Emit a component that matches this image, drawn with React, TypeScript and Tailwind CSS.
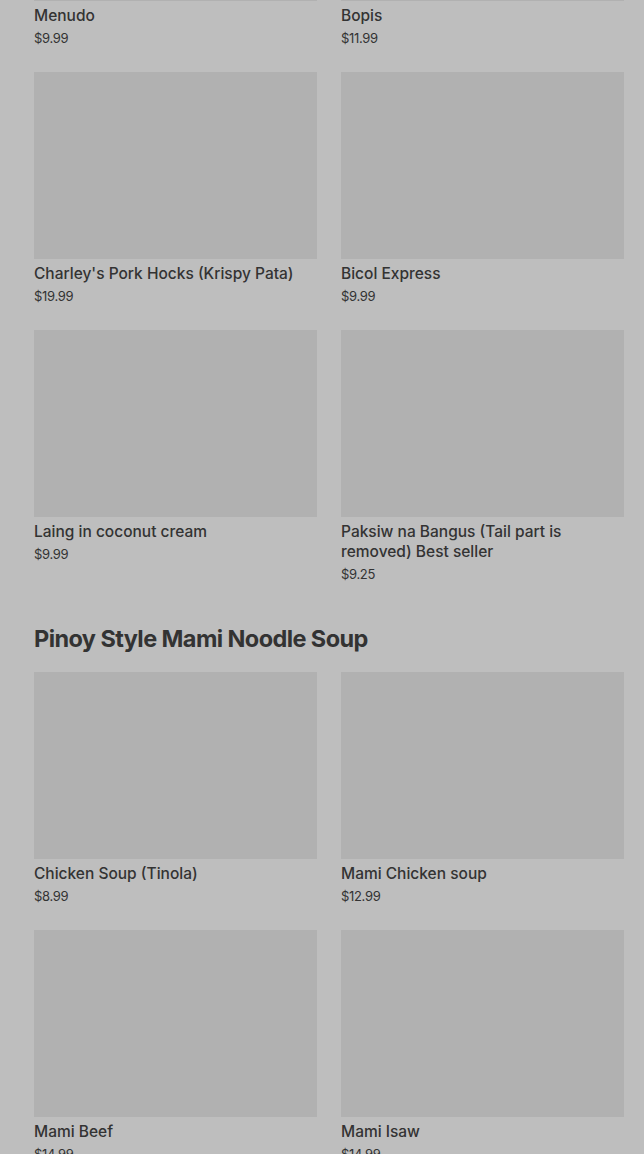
const firstSection = [
  { name: 'Menudo', price: '$9.99' },
  { name: 'Bopis', price: '$11.99' },
  { name: "Charley's Pork Hocks (Krispy Pata)", price: '$19.99' },
  { name: 'Bicol Express', price: '$9.99' },
  { name: 'Laing in coconut cream', price: '$9.99' },
  { name: 'Paksiw na Bangus (Tail part is removed) Best seller', price: '$9.25' },
];

const mamiSection = [
  { name: 'Chicken Soup (Tinola)', price: '$8.99' },
  { name: 'Mami Chicken soup', price: '$12.99' },
  { name: 'Mami Beef', price: '$14.99' },
  { name: 'Mami Isaw', price: '$14.99' },
];

function ItemCard({ name, price }: { name: string; price: string }) {
  return (
    <div className="flex flex-col">
      <div className="h-[187px] w-full bg-[#b1b1b1]" />
      <h3 className="mt-[5px] text-[15.5px] leading-[20px] font-medium text-[#333]">{name}</h3>
      <p className="mt-[3px] text-[13px] leading-[18px] text-[#333] tracking-tight">{price}</p>
    </div>
  );
}

export default function App() {
  return (
    <div
      className="h-[1154px] overflow-hidden bg-[#bebebe]"
      style={{ fontFamily: 'Inter, "Noto Sans", sans-serif' }}
    >
      <div className="-mt-[186px] pl-[34px] pr-[20px]">
        <div className="grid grid-cols-2 gap-x-[24px] gap-y-[25px]">
          {firstSection.map((item) => (
            <ItemCard key={item.name} {...item} />
          ))}
        </div>

        <h2 className="mt-[41px] mb-[18px] text-[23.5px] leading-[30px] font-bold tracking-tight text-[#333]">
          Pinoy Style Mami Noodle Soup
        </h2>

        <div className="grid grid-cols-2 gap-x-[24px] gap-y-[25px]">
          {mamiSection.map((item) => (
            <ItemCard key={item.name} {...item} />
          ))}
        </div>
      </div>
    </div>
  );
}
